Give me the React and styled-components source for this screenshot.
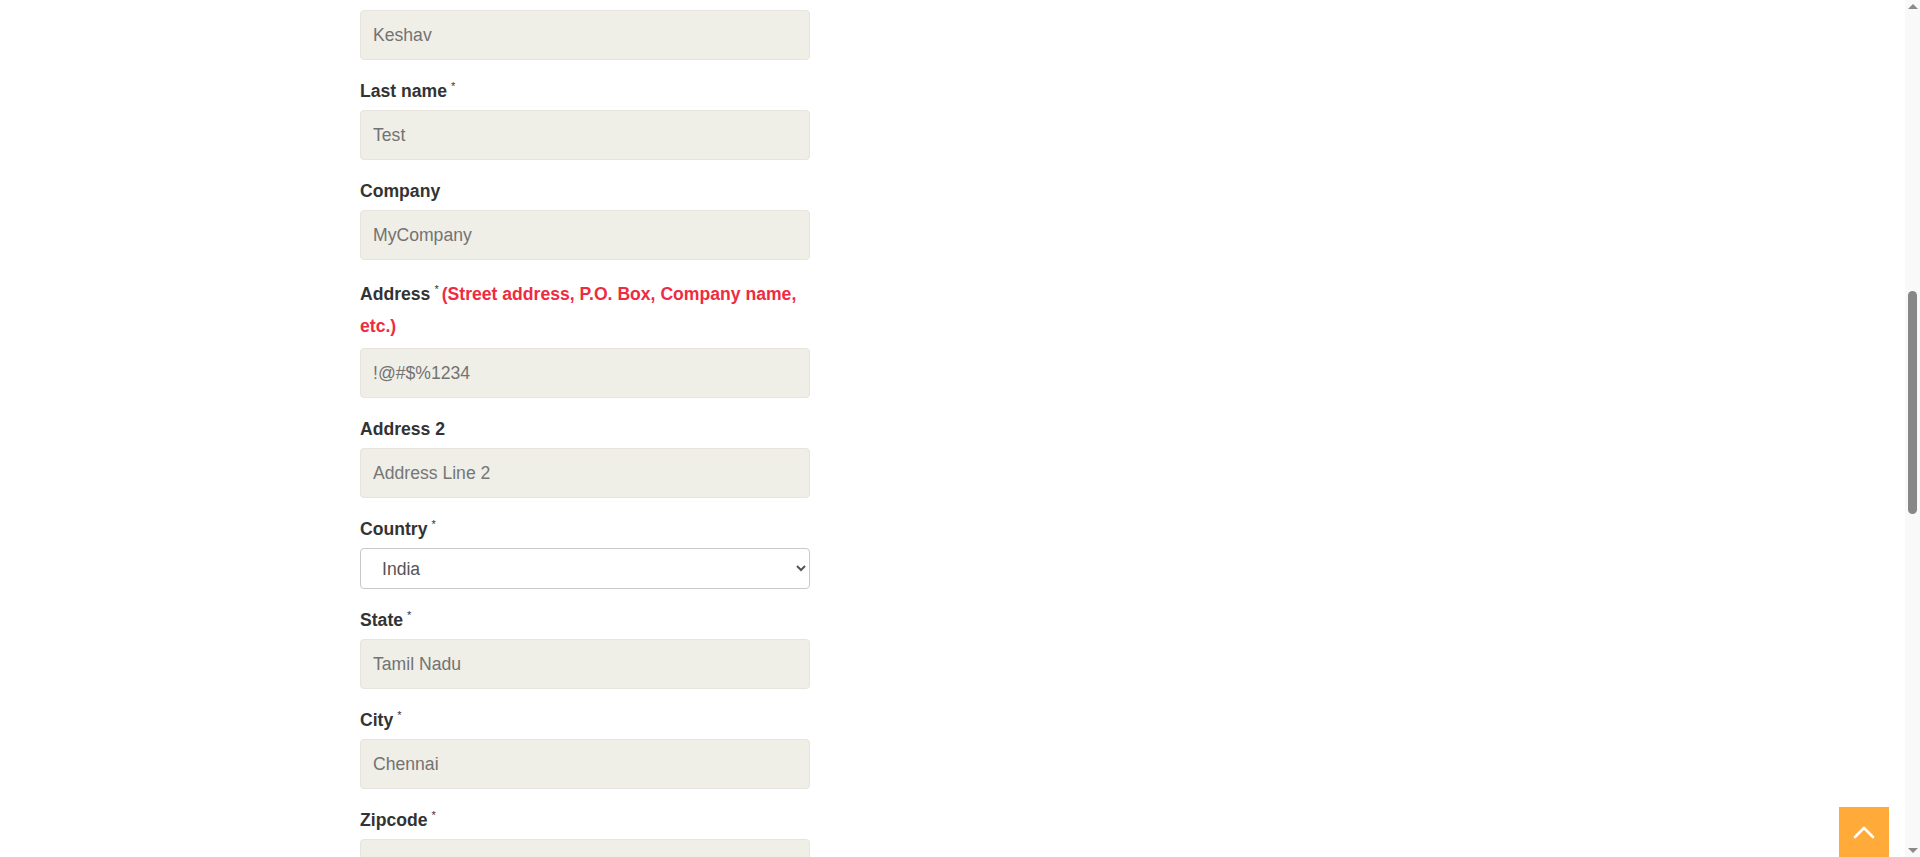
import React from 'react';
import styled, { createGlobalStyle } from 'styled-components';

const GlobalStyle = createGlobalStyle`
  html, body {
    margin: 0;
    padding: 0;
    height: 100%;
    overflow: hidden;
    background: #ffffff;
    font-family: 'Liberation Sans', Arial, sans-serif;
  }
`;

const Page = styled.div`
  height: 857px;
  overflow: hidden;
  padding: 10px 0 0 360px;
  box-sizing: border-box;
`;

const Form = styled.form`
  width: 450px;
  display: flex;
  flex-direction: column;
  gap: 12px;
`;

const Field = styled.div`
  display: flex;
  flex-direction: column;
`;

// labels with a hint wrap onto two lines, spaced a bit tighter
const Label = styled.label`
  display: block;
  font-size: 17.6px;
  line-height: ${({ $wrap }) => ($wrap ? '32px' : '38px')};
  padding: ${({ $wrap }) => ($wrap ? '6px 0' : '0')};
  font-weight: bold;
  color: #333;
`;

const Req = styled.span`
  font-size: 11px;
  font-weight: normal;
  line-height: 0;
  margin-left: 4px;
  position: relative;
  top: -7px;
`;

const Hint = styled.span`
  color: #ef2b41;
  margin-left: 3px;
`;

const Input = styled.input`
  box-sizing: border-box;
  width: 100%;
  height: 50px;
  padding: 0 12px;
  border: 1px solid #e6e4dc;
  border-radius: 4px;
  background: #efeee7;
  font-family: 'Liberation Sans', Arial, sans-serif;
  font-size: 17.6px;
  color: #737373;
  outline: none;

  &::placeholder {
    color: #767676;
  }
`;

const Select = styled.select`
  box-sizing: border-box;
  width: 100%;
  height: 41px;
  padding: 0 8px 0 17px;
  border: 1px solid #c9c9c9;
  border-radius: 4px;
  background: #fff;
  font-family: 'Liberation Sans', Arial, sans-serif;
  font-size: 17.6px;
  color: #555;
`;

const Scrollbar = styled.div`
  position: fixed;
  top: 0;
  right: 0;
  width: 15px;
  height: 857px;
  background: #f9f9f9;
  display: flex;
  flex-direction: column;
  align-items: center;
  justify-content: space-between;
  padding: 4px 0;
  box-sizing: border-box;
`;

const Arrow = styled.div`
  width: 0;
  height: 0;
  border-left: 5px solid transparent;
  border-right: 5px solid transparent;
  ${({ $down }) => ($down
    ? 'border-top: 5px solid #8a8a8a;'
    : 'border-bottom: 5px solid #8a8a8a;')}
`;

const Track = styled.div`
  flex: 1;
  width: 9px;
  padding-top: 282px;
`;

const Thumb = styled.div`
  width: 9px;
  height: 223px;
  border-radius: 5px;
  background: #878787;
`;

const TopButton = styled.button`
  position: fixed;
  right: 31px;
  bottom: 0;
  width: 50px;
  height: 50px;
  border: none;
  padding: 0;
  background: #ffaa39;
  display: flex;
  align-items: center;
  justify-content: center;
  cursor: pointer;
`;

const fields = [
  { value: 'Keshav' },
  { label: 'Last name', req: true, value: 'Test' },
  { label: 'Company', value: 'MyCompany' },
  { label: 'Address', req: true, hint: '(Street address, P.O. Box, Company name, etc.)', value: '!@#$%1234' },
  { label: 'Address 2', placeholder: 'Address Line 2' },
  { label: 'Country', req: true, select: 'India' },
  { label: 'State', req: true, value: 'Tamil Nadu' },
  { label: 'City', req: true, value: 'Chennai' },
  { label: 'Zipcode', req: true, value: '' },
];

const App = () => {
  return (
    <>
      <GlobalStyle />
      <Page>
        <Form>
          {fields.map((f, i) => (
            <Field key={i}>
              {f.label && (
                <Label $wrap={!!f.hint}>
                  {f.label}
                  {f.req && <Req>*</Req>}
                  {f.hint && <Hint>{f.hint}</Hint>}
                </Label>
              )}
              {f.select ? (
                <Select defaultValue={f.select}>
                  <option>India</option>
                </Select>
              ) : (
                <Input readOnly defaultValue={f.value} placeholder={f.placeholder} />
              )}
            </Field>
          ))}
        </Form>
      </Page>
      <Scrollbar>
        <Arrow />
        <Track>
          <Thumb />
        </Track>
        <Arrow $down />
      </Scrollbar>
      <TopButton type="button" aria-label="Back to top">
        <svg width="22" height="14" viewBox="0 0 22 14" fill="none">
          <path d="M2 12 L11 3 L20 12" stroke="#fff" strokeWidth="2.6" strokeLinecap="round" strokeLinejoin="round" />
        </svg>
      </TopButton>
    </>
  );
};

export default App;
